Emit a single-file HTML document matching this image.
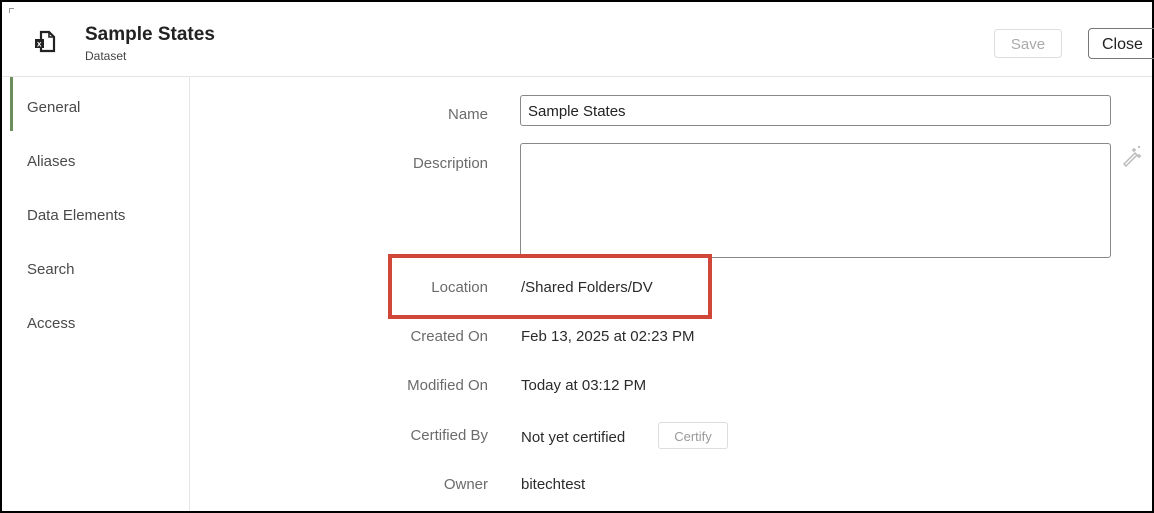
<!DOCTYPE html>
<html><head><style>
body{margin:0;width:1154px;height:513px;overflow:hidden;background:#fff;font-family:"Liberation Sans",sans-serif;}
.frame{position:absolute;left:0;top:0;width:1150px;height:509px;border:2px solid #000;}
.a{position:absolute;white-space:nowrap;}
.lbl{position:absolute;right:666px;font-size:15px;color:#6b6b6b;text-align:right;}
.val{position:absolute;left:521px;font-size:15px;color:#2b2b2b;}
.nav{position:absolute;left:27px;font-size:15px;color:#4a4a4a;}
</style></head><body>
<div class="frame"></div>
<div class="a" style="left:9px;top:8px;width:4px;height:4px;border-left:1px solid #999;border-top:1px solid #999;"></div>
<svg class="a" style="left:32px;top:28px" width="28" height="28" viewBox="0 0 28 28">
<path d="M9 4h8l5 5v14H9z" fill="none" stroke="#222" stroke-width="2.2"/>
<path d="M17 4v5h5" fill="none" stroke="#222" stroke-width="1.6"/>
<rect x="3" y="11" width="9" height="9" fill="#222"/>
<text x="5" y="18.5" font-size="8" fill="#fff" font-family="Liberation Sans" font-weight="bold">x</text>
</svg>
<div class="a" style="left:85px;top:24px;font-size:19px;font-weight:bold;color:#222;">Sample States</div>
<div class="a" style="left:85px;top:49px;font-size:12px;color:#444;">Dataset</div>
<div class="a" style="left:994px;top:29px;width:68px;height:29px;border:1px solid #ddd;border-radius:4px;box-sizing:border-box;color:#aaa;font-size:15px;text-align:center;line-height:29px;">Save</div>
<div class="a" style="left:1088px;top:28px;width:70px;height:31px;border:1px solid #777;border-radius:4px;box-sizing:border-box;color:#222;font-size:16px;line-height:31px;padding-left:13px;">Close</div>
<div class="a" style="left:2px;top:76px;width:1150px;height:1px;background:#e4e4e4;"></div>
<div class="a" style="left:189px;top:77px;width:1px;height:434px;background:#e4e4e4;"></div>
<div class="a" style="left:10px;top:77px;width:3px;height:54px;background:#6b8e5a;"></div>
<div class="nav" style="top:99px">General</div>
<div class="nav" style="top:153px">Aliases</div>
<div class="nav" style="top:207px">Data Elements</div>
<div class="nav" style="top:261px">Search</div>
<div class="nav" style="top:315px">Access</div>
<div class="lbl" style="top:106px">Name</div>
<div class="lbl" style="top:155px">Description</div>
<div class="lbl" style="top:279px">Location</div>
<div class="lbl" style="top:328px">Created On</div>
<div class="lbl" style="top:377px">Modified On</div>
<div class="lbl" style="top:427px">Certified By</div>
<div class="lbl" style="top:476px">Owner</div>
<div class="a" style="left:520px;top:95px;width:591px;height:31px;border:1px solid #888;border-radius:3px;box-sizing:border-box;font-size:15px;color:#222;line-height:31px;padding-left:7px;">Sample States</div>
<div class="a" style="left:520px;top:143px;width:591px;height:115px;border:1px solid #888;border-radius:3px;box-sizing:border-box;"></div>
<svg class="a" style="left:1120px;top:144px" width="24" height="24" viewBox="0 0 24 24" stroke="#bbb" fill="none" stroke-width="1.5">
<path d="M4 20l11-11 2 2-11 11z"/><path d="M14 4v4M12 6h4M19 10v4M17 12h4M19 2v2M18 3h2"/></svg>
<div class="val" style="top:279px">/Shared Folders/DV</div>
<div class="val" style="top:328px">Feb 13, 2025 at 02:23 PM</div>
<div class="val" style="top:377px">Today at 03:12 PM</div>
<div class="val" style="top:429px">Not yet certified</div>
<div class="a" style="left:658px;top:422px;width:70px;height:27px;border:1px solid #ddd;border-radius:3px;box-sizing:border-box;font-size:13px;color:#999;text-align:center;line-height:27px;">Certify</div>
<div class="val" style="top:476px">bitechtest</div>
<div class="a" style="left:388px;top:254px;width:324px;height:65px;border:4px solid #d0473a;box-sizing:border-box;"></div>
</body></html>
